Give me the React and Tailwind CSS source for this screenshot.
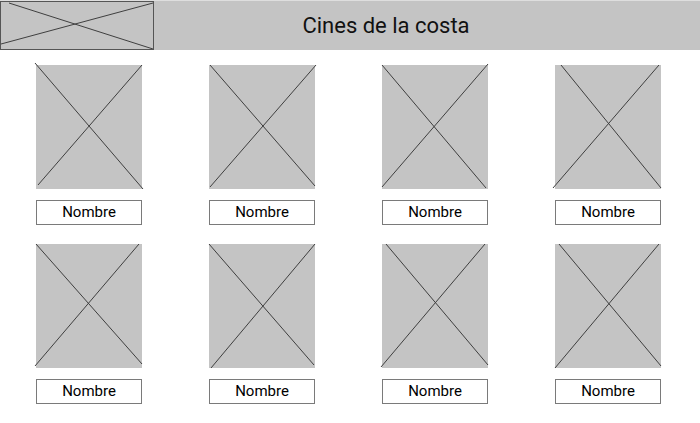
import React from "react";

const cines = [
  { l1: [-1, -2, 107, 124], l2: [2, 120, 106, 0] },
  { l1: [1, 0, 106, 121], l2: [1, 122, 107, 0] },
  { l1: [0, 0, 104, 123], l2: [0, 122, 106, -1] },
  { l1: [6, 0, 106, 123], l2: [-2, 123, 104, 0] },
  { l1: [0, 0, 106, 120], l2: [-1, 122, 103, 0] },
  { l1: [0, 0, 105, 121], l2: [2, 124, 106, 0] },
  { l1: [4, 0, 106, 121], l2: [-1, 123, 103, 0] },
  { l1: [4, 0, 106, 122], l2: [0, 124, 104, 0] },
];

const Cross = ({ l1, l2 }) => (
  <svg
    width="106"
    height="124"
    viewBox="0 0 106 124"
    className="block overflow-visible"
  >
    <line x1={l1[0]} y1={l1[1]} x2={l1[2]} y2={l1[3]} stroke="#3f3f3f" strokeWidth="1" />
    <line x1={l2[0]} y1={l2[1]} x2={l2[2]} y2={l2[3]} stroke="#3f3f3f" strokeWidth="1" />
  </svg>
);

const CineCard = ({ cine }) => (
  <div className="flex flex-col">
    {/* Imagen */}
    <div className="w-[106px] h-[124px] bg-[#c4c4c4]">
      <Cross l1={cine.l1} l2={cine.l2} />
    </div>
    {/* Nombre */}
    <div className="mt-[11px] w-[106px] h-[25px] bg-white border border-[#7a7a7a] flex items-center justify-center text-[15px] text-black leading-none">
      Nombre
    </div>
  </div>
);

const App = () => {
  return (
    <div
      className="w-[700px] h-[423px] bg-white overflow-hidden"
      style={{ fontFamily: "Roboto, 'Liberation Sans', sans-serif" }}
    >
      {/* Header */}
      <div className="h-[50px] flex bg-[#c4c4c4] border-t border-[#dedede]">
        <div className="w-[154px] h-[49px] border border-[#555555]">
          <svg width="100%" height="100%" viewBox="0 0 152 47" preserveAspectRatio="none" className="block">
            <line x1="8" y1="1" x2="152" y2="47" stroke="#3f3f3f" strokeWidth="1" />
            <line x1="0" y1="42" x2="152" y2="1" stroke="#3f3f3f" strokeWidth="1" />
          </svg>
        </div>
        <div className="flex-1 flex items-center justify-center pr-[82px] text-[22px] text-[#111]">
          Cines de la costa
        </div>
      </div>

      {/* Cartelera */}
      <div className="pt-[15px] pl-[36px] grid grid-cols-[106px_106px_106px_106px] gap-x-[67px] gap-y-[19px]">
        {cines.map((cine, i) => (
          <CineCard key={i} cine={cine} />
        ))}
      </div>
    </div>
  );
};

export default App;
